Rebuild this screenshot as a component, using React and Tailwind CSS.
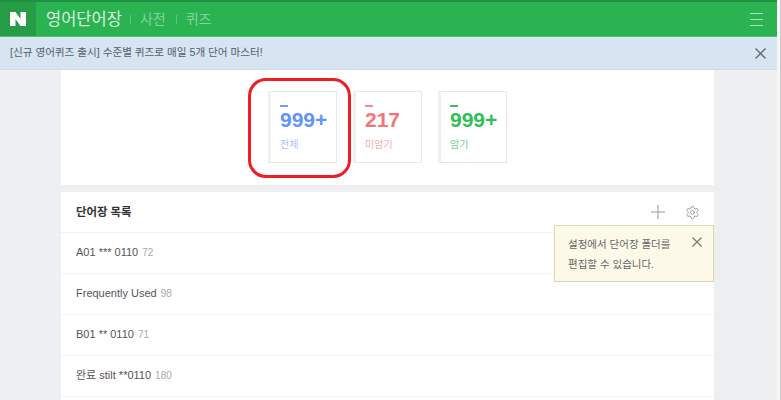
import React from "react";
import { Settings } from "lucide-react";

const FONT = { fontFamily: '"Liberation Sans", "Noto Sans CJK KR", sans-serif' };

const cards = [
  { num: "999+", label: "전체", dash: "bg-[#6f9cf5]", numColor: "text-[#5f95f7]", labelColor: "text-[#a9c4f8]" },
  { num: "217", label: "미암기", dash: "bg-[#f58a90]", numColor: "text-[#f6727b]", labelColor: "text-[#f9a9ae]" },
  { num: "999+", label: "암기", dash: "bg-[#3cc062]", numColor: "text-[#2fbf57]", labelColor: "text-[#6fd08c]" },
];

const folders = [
  { name: "A01 *** 0110", count: 72 },
  { name: "Frequently Used", count: 98 },
  { name: "B01 ** 0110", count: 71 },
  { name: "완료 stilt **0110", count: 180 },
];

function Card({ card }) {
  return (
    <div className="w-[69px] h-[72px] bg-white border border-[#e8e8e8] border-l-[3px] border-l-[#efefef] pl-[9px] pt-[13px]">
      <div className={`w-[8px] h-[2px] ${card.dash}`}></div>
      <div className={`text-[21px] leading-[24px] font-bold mt-[1px] whitespace-nowrap ${card.numColor}`}>{card.num}</div>
      <div className={`text-[10px] leading-[14px] mt-[6px] ${card.labelColor}`}>{card.label}</div>
    </div>
  );
}

export default function App() {
  return (
    <div className="relative w-[781px] h-[400px] overflow-hidden flex text-[#444]" style={FONT}>
      <div className="w-[777px] h-full bg-[#eeeff1]">
        <div className="h-[37px] bg-[#2bb351] border-t-2 border-t-[#1f8f40] border-b border-b-[#4fc06e] flex items-center">
          <div className="w-[36px] h-full bg-[#269c47] flex items-center justify-center">
            <svg width="16" height="14" viewBox="0 0 16 14" fill="#fff">
              <path d="M0 0h5.500l5 7V0H16v14h-5.500l-5-7v7H0z" />
            </svg>
          </div>
          <div className="ml-[10px] text-[#d8f3df] text-[16.5px] leading-[20px]">영어단어장</div>
          <div className="ml-[8px] w-[1px] h-[9px] bg-[#5cc67b]"></div>
          <div className="ml-[9px] text-[#7fd49a] text-[14px]">사전</div>
          <div className="ml-[10px] w-[1px] h-[9px] bg-[#5cc67b]"></div>
          <div className="ml-[9px] text-[#7fd49a] text-[14px]">퀴즈</div>
          <div className="ml-auto mr-[14px] flex flex-col gap-[5px]">
            <div className="w-[13px] h-[1px] bg-[#a5e0b8]"></div>
            <div className="w-[13px] h-[1px] bg-[#a5e0b8]"></div>
            <div className="w-[13px] h-[1px] bg-[#a5e0b8]"></div>
          </div>
        </div>

        <div className="h-[33px] bg-[#d7e4f1] border-b border-b-[#cfdcea] flex items-center justify-between pl-[10px] pr-[11px]">
          <div className="text-[10.6px] text-[#555e68]">[신규 영어퀴즈 출시] 수준별 퀴즈로 매일 5개 단어 마스터!</div>
          <svg width="11" height="11" viewBox="0 0 11 11" stroke="#666" strokeWidth="1.3" fill="none">
            <path d="M.5.5l10 10M10.500.5l-10 10" />
          </svg>
        </div>

        <div className="ml-[61px] w-[653px]">
          <div className="h-[115px] bg-white flex pl-[207px] pt-[21px] gap-[16px]">
            {cards.map((c, i) => (
              <Card key={i} card={c} />
            ))}
          </div>

          <div className="mt-[7px] bg-white h-[208px]">
            <div className="h-[41px] border-b border-b-[#f3f3f3] flex items-center pl-[15px] pr-[14px]">
              <div className="text-[11.4px] font-bold text-[#333] pt-[2px]">단어장 목록</div>
              <svg className="ml-auto" width="14" height="14" viewBox="0 0 14 14" stroke="#999" strokeWidth="1" fill="none">
                <path d="M7 0v14M0 7h14" />
              </svg>
              <Settings className="ml-[20px] text-[#999]" size={15} strokeWidth={1.5} />
            </div>
            {folders.map((f, i) => (
              <div key={i} className="h-[41px] border-b border-b-[#f3f3f3] flex items-center pl-[15px] pb-[2px] text-[11px] text-[#555]">
                {f.name}
                <span className="ml-[4px] text-[10px] text-[#aaa]">{f.count}</span>
              </div>
            ))}
          </div>
        </div>
      </div>
      <div className="w-[4px] h-full bg-[#f6f6f6] border-r border-r-[#cccccc]"></div>

      <div className="absolute left-[248px] top-[78px] w-[103px] h-[100px] rounded-[18px] border-[3px] border-[#f01c24]"></div>

      <div className="absolute left-[554px] top-[225px] w-[160px] h-[57px] bg-[#fdf9e9] border border-[#dcd6b4] pl-[13px] pt-[8px] text-[10.5px] leading-[20px] text-[#666]">
        <div>설정에서 단어장 폴더를</div>
        <div>편집할 수 있습니다.</div>
        <svg className="absolute right-[11px] top-[11px]" width="10" height="10" viewBox="0 0 10 10" stroke="#777" strokeWidth="1.2" fill="none">
          <path d="M.5.5l9 9M9.500.5l-9 9" />
        </svg>
      </div>
    </div>
  );
}
